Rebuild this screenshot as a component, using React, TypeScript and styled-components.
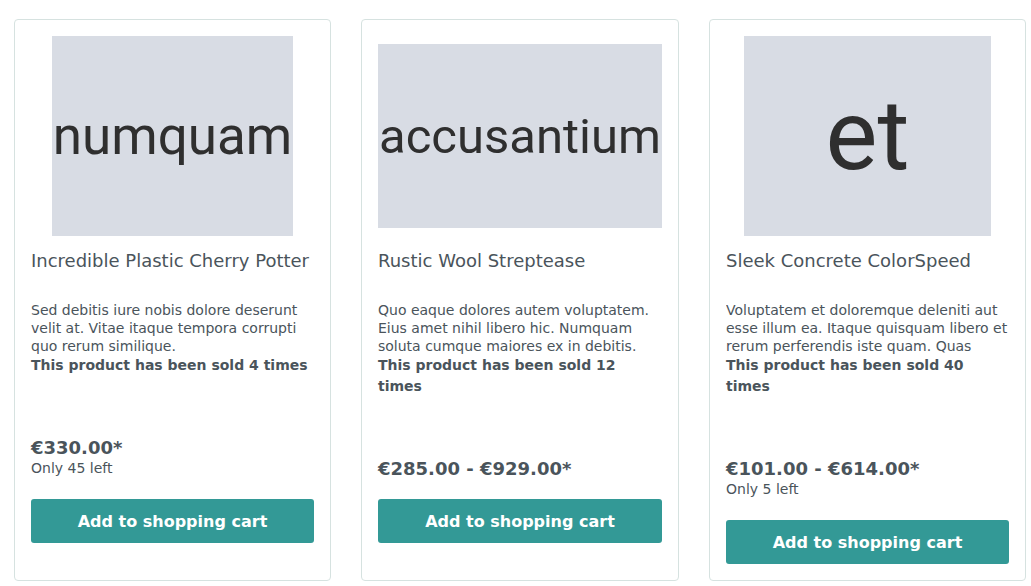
import React from "react";
import styled, { createGlobalStyle } from "styled-components";

const GlobalStyle = createGlobalStyle`
  html, body {
    margin: 0;
    padding: 0;
    background: #ffffff;
  }
  body {
    font-family: "DejaVu Sans", "Liberation Sans", sans-serif;
    color: #4a545b;
    font-size: 14px;
    line-height: 1.5;
  }
  * { box-sizing: border-box; }
`;

const Listing = styled.div`
  display: grid;
  grid-template-columns: repeat(3, 1fr);
  column-gap: 30px;
  padding: 19px 5px 0 14px;
  align-items: start;
`;

const Card = styled.div`
  border: 1px solid #d6e2e0;
  border-radius: 4px;
  padding: 16px;
  display: flex;
  flex-direction: column;
  align-self: stretch;
`;

const ImageBox = styled.div`
  height: 200px;
  display: flex;
  align-items: center;
  justify-content: center;
`;

const Placeholder = styled.div<{ $w: number; $h: number; $size: number }>`
  width: ${(p) => p.$w}px;
  height: ${(p) => p.$h}px;
  background: #d8dce4;
  display: flex;
  align-items: center;
  justify-content: center;
  font-family: Roboto, "Open Sans", sans-serif;
  font-size: ${(p) => p.$size}px;
  color: #2f2f2f;
  line-height: 1;
  overflow: hidden;
  white-space: nowrap;
`;

const Title = styled.div`
  margin-top: 14px;
  font-size: 18px;
  line-height: 22px;
  color: #4a545b;
`;

const Description = styled.div`
  margin-top: 29px;
  font-size: 14px;
  line-height: 18px;
  max-height: 54px;
  overflow: hidden;
`;

const Sold = styled.div`
  font-weight: bold;
  font-size: 14px;
  line-height: 21px;
`;

const Price = styled.div`
  margin-top: 61px;
  font-size: 18px;
  font-weight: bold;
  line-height: 21px;
`;

const Stock = styled.div`
  font-size: 14px;
  line-height: 21px;
`;

const CartButton = styled.button`
  margin-top: 20px;
  height: 44px;
  width: 100%;
  border: none;
  border-radius: 3px;
  background: #339996;
  color: #ffffff;
  font-family: "DejaVu Sans", "Liberation Sans", sans-serif;
  font-weight: bold;
  font-size: 16px;
  cursor: pointer;
`;

type Product = {
  img: { text: string; w: number; h: number; size: number };
  name: string;
  desc: string;
  sold: number;
  price: string;
  stock?: number;
};

const products: Product[] = [
  {
    img: { text: "numquam", w: 241, h: 200, size: 53 },
    name: "Incredible Plastic Cherry Potter",
    desc: "Sed debitis iure nobis dolore deserunt velit at. Vitae itaque tempora corrupti quo rerum similique.",
    sold: 4,
    price: "€330.00*",
    stock: 45,
  },
  {
    img: { text: "accusantium", w: 284, h: 184, size: 49 },
    name: "Rustic Wool Streptease",
    desc: "Quo eaque dolores autem voluptatem. Eius amet nihil libero hic. Numquam soluta cumque maiores ex in debitis.",
    sold: 12,
    price: "€285.00 - €929.00*",
  },
  {
    img: { text: "et", w: 247, h: 200, size: 98 },
    name: "Sleek Concrete ColorSpeed",
    desc: "Voluptatem et doloremque deleniti aut esse illum ea. Itaque quisquam libero et rerum perferendis iste quam. Quas",
    sold: 40,
    price: "€101.00 - €614.00*",
    stock: 5,
  },
];

export default function App() {
  return (
    <>
      <GlobalStyle />
      <Listing>
        {products.map((p) => (
          <Card key={p.name}>
            <ImageBox>
              <Placeholder $w={p.img.w} $h={p.img.h} $size={p.img.size}>
                {p.img.text}
              </Placeholder>
            </ImageBox>
            <Title>{p.name}</Title>
            <Description>{p.desc}</Description>
            <Sold>This product has been sold {p.sold} times</Sold>
            <Price>{p.price}</Price>
            {p.stock !== undefined && <Stock>Only {p.stock} left</Stock>}
            <CartButton>Add to shopping cart</CartButton>
          </Card>
        ))}
      </Listing>
    </>
  );
}
